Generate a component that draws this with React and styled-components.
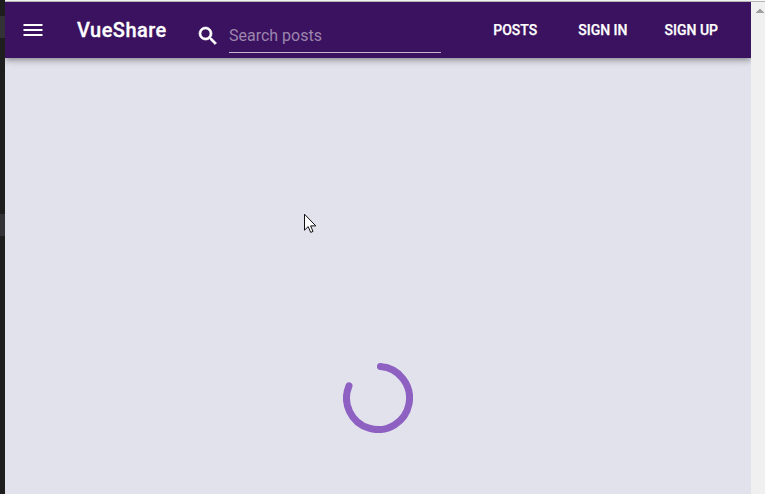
import React from "react";
import styled, { createGlobalStyle } from "styled-components";

const GlobalStyle = createGlobalStyle`
  *, *::before, *::after { box-sizing: border-box; }
  body { margin: 0; overflow: hidden; font-family: Roboto, sans-serif; }
`;

const Window = styled.div`
  position: relative;
  display: grid;
  grid-template-columns: 5px 1fr 14px;
  width: 765px;
  height: 494px;
  overflow: hidden;
`;

const EditorEdge = styled.div`
  background: #1e1e1e;
  padding-top: 16px;
  display: flex;
  flex-direction: column;
  gap: 176px;
`;

const EdgeMark = styled.div`
  height: 22px;
  background: #333337;
`;

const Viewport = styled.div`
  display: flex;
  flex-direction: column;
  overflow: hidden;
  background: #e2e2ec;
  border-top: 1px solid #f1f1f1;
`;

const Toolbar = styled.header`
  display: flex;
  flex: none;
  align-items: center;
  height: 57px;
  padding: 0 33px 0 16px;
  border-top: 1px solid #b5b5b5;
  background: #3b125f;
  color: #fff;
  box-shadow: 0 2px 4px -1px rgba(0, 0, 0, 0.2), 0 4px 5px rgba(0, 0, 0, 0.14),
    0 1px 10px rgba(0, 0, 0, 0.12);
`;

const MenuButton = styled.button`
  display: flex;
  padding: 0;
  margin-right: 32px;
  border: 0;
  background: none;
  color: inherit;
`;

const MenuIcon = styled.svg`
  width: 24px;
  height: 24px;
  fill: currentColor;
`;

const Brand = styled.div`
  width: 119px;
  font-size: 20px;
  font-weight: 500;
  line-height: 24px;
  letter-spacing: 0.45px;
  -webkit-text-stroke: 0.3px currentColor;
`;

const SearchField = styled.label`
  display: flex;
  align-items: center;
  width: 250px;
  height: 34px;
  margin-top: 11px;
`;

const SearchIcon = styled.svg`
  width: 24px;
  height: 24px;
  margin-right: 9px;
  fill: currentColor;
  stroke: currentColor;
  stroke-width: 0.7;
`;

const SearchInput = styled.input`
  width: 212px;
  height: 34px;
  margin-top: 1px;
  padding: 0 0 1px;
  border: 0;
  border-bottom: 1px solid #c4b8cf;
  outline: 0;
  background: transparent;
  color: #fff;
  font: 400 16px Roboto, sans-serif;
  &::placeholder { color: #9c85ae; opacity: 1; }
`;

const Navigation = styled.nav`
  display: flex;
  margin-left: auto;
`;

const NavLink = styled.a`
  margin-left: ${({ $gap }) => $gap}px;
  color: #fff;
  font-size: 14px;
  font-weight: 500;
  line-height: 20px;
  white-space: nowrap;
  -webkit-text-stroke: 0.25px currentColor;
`;

const Content = styled.main`
  display: flex;
  flex: 1;
  justify-content: center;
  padding-top: 305px;
`;

const Spinner = styled.svg`
  width: 70px;
  height: 70px;
  fill: none;
  stroke: #8d60c2;
  stroke-width: 7;
  stroke-linecap: round;
`;

const Scrollbar = styled.div`
  display: flex;
  justify-content: center;
  padding: 8px 0 0 3px;
  border-top: 1px solid #f8f8f8;
  background: linear-gradient(#b5b5b5 1px, #f0f0f0 1px);
`;

const ScrollArrow = styled.svg`
  width: 8px;
  height: 4px;
  fill: #a0a0a0;
`;

const Cursor = styled.svg`
  position: absolute;
  left: 304px;
  top: 213px;
  width: 13px;
  height: 21px;
`;

const links = [
  { label: "POSTS", gap: 0 },
  { label: "SIGN IN", gap: 41 },
  { label: "SIGN UP", gap: 37 },
];

export default function App() {
  return (
    <>
      <GlobalStyle />
      <Window>
        <EditorEdge>
          <EdgeMark />
          <EdgeMark />
        </EditorEdge>
        <Viewport>
          <Toolbar>
            <MenuButton aria-label="Menu">
              <MenuIcon viewBox="0 0 24 24">
                <path d="M2.5 6h19v2h-19zm0 5h19v2h-19zm0 5h19v2h-19z" />
              </MenuIcon>
            </MenuButton>
            <Brand>VueShare</Brand>
            <SearchField>
              <SearchIcon viewBox="0 0 24 24">
                <path d="M15.5 14h-.79l-.28-.27A6.47 6.47 0 0 0 16 9.5 6.5 6.5 0 1 0 9.5 16c1.61 0 3.09-.59 4.23-1.57l.27.28v.79l5 4.99L20.49 19zm-6 0a4.5 4.5 0 1 1 0-9 4.5 4.5 0 0 1 0 9z" />
              </SearchIcon>
              <SearchInput placeholder="Search posts" />
            </SearchField>
            <Navigation>
              {links.map(({ label, gap }) => (
                <NavLink key={label} $gap={gap}>{label}</NavLink>
              ))}
            </Navigation>
          </Toolbar>
          <Content>
            <Spinner viewBox="0 0 70 70" aria-label="Loading">
              <path d="M37.5 3.6A31.5 31.5 0 1 1 6 22.8" />
            </Spinner>
          </Content>
        </Viewport>
        <Scrollbar>
          <ScrollArrow viewBox="0 0 8 4" shapeRendering="crispEdges">
            <path d="M3 0h2v1h1v1h1v1h1v1H0V3h1V2h1V1h1z" />
          </ScrollArrow>
        </Scrollbar>
        <Cursor viewBox="0 0 13 21">
          <path
            d="M.5 1.2v16l3.7-3.6 2.5 5.8 2.3-1-2.4-5.5h5.2z"
            fill="#fff"
            stroke="#111"
          />
        </Cursor>
      </Window>
    </>
  );
}
